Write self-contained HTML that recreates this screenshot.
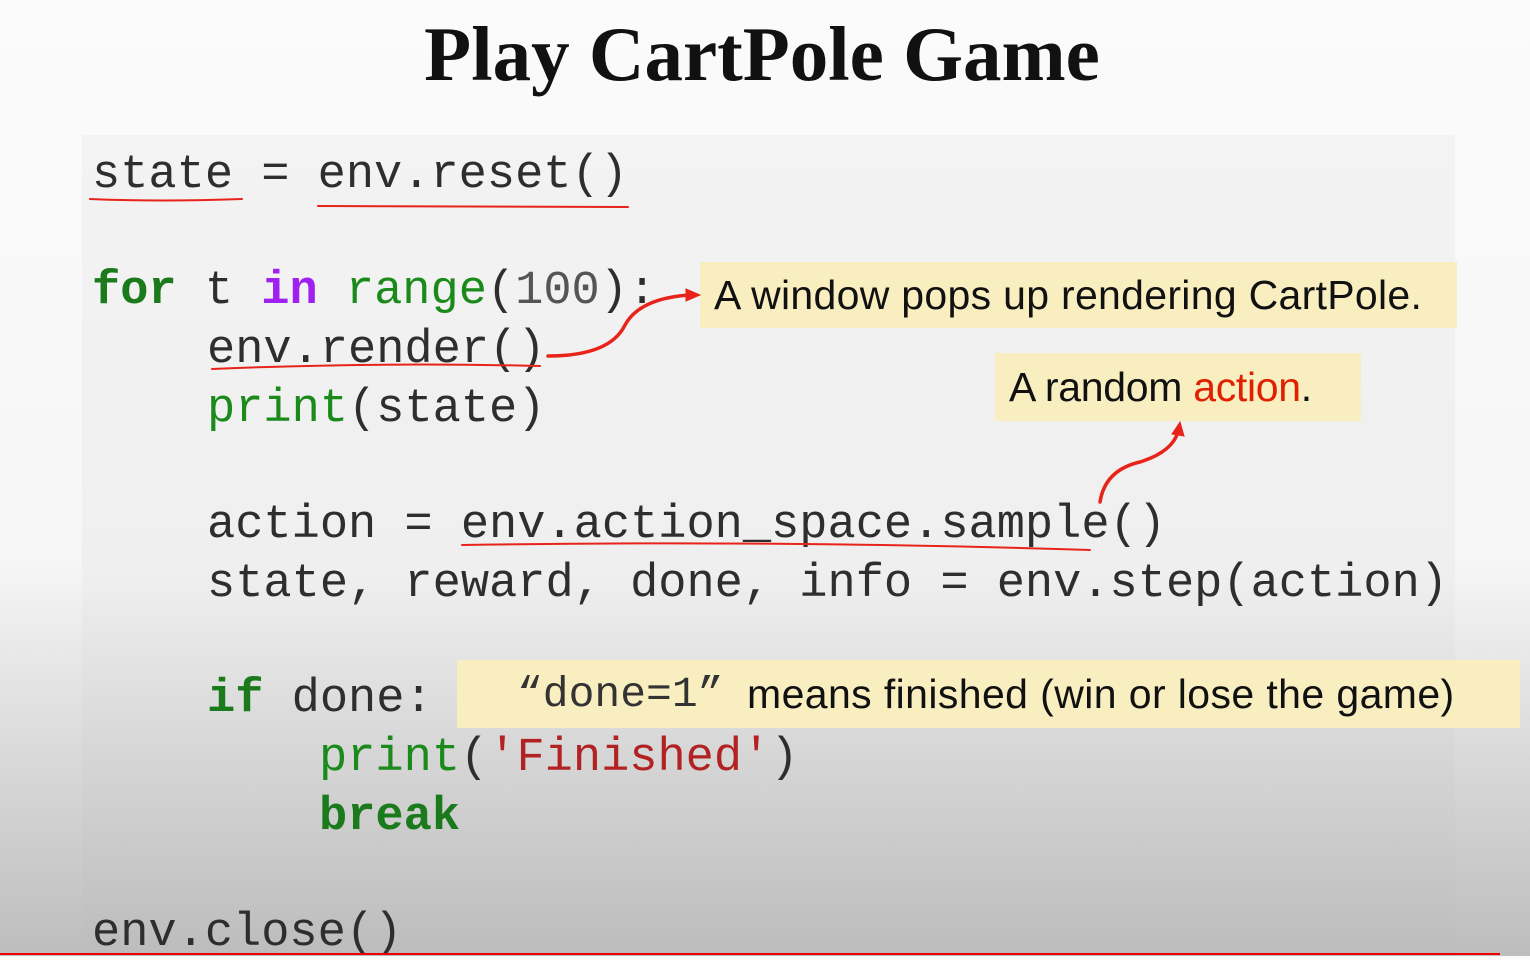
<!DOCTYPE html>
<html><head><meta charset="utf-8"><style>
body{margin:0;width:1530px;height:956px;overflow:hidden;position:relative;
background:linear-gradient(#fbfbfb 0px,#f6f6f6 560px,#dadada 750px,#bdbdbd 956px);font-family:"Liberation Sans",sans-serif}
.panel{position:absolute;left:82px;top:135px;width:1373px;height:821px;background:linear-gradient(#f3f3f3 0px,#efefef 440px,#d6d6d6 620px,#bcbcbc 821px)}
h1{position:absolute;left:0;width:1524px;top:10px;margin:0;text-align:center;font:bold 77px "Liberation Serif",serif;color:#111}
.c{position:absolute;font-family:"Liberation Mono",monospace;font-size:47px;color:#2e2e2e;white-space:pre;line-height:1}
.g{color:#1a8a1a}.k{color:#1b7a1b;font-weight:bold}.p{color:#a020f0;font-weight:bold}.s{color:#b22222}.n{color:#555}
.box{position:absolute;background:#f8eec0;font-size:41px;color:#111;white-space:nowrap;box-sizing:border-box;padding-left:14px;display:flex;align-items:center;letter-spacing:0.3px}
.red{position:absolute;left:0;top:953px;width:1500px;height:2px;background:#e00}
</style></head><body>
<h1>Play CartPole Game</h1>
<div class="panel"></div>
<div class="c" style="left:92px;top:152px">state = env.reset()</div>
<div class="c" style="left:92px;top:268px"><span class="k">for</span> t <span class="p">in</span> <span class="g">range</span>(<span class="n">100</span>):</div>
<div class="c" style="left:207px;top:327px">env.render()</div>
<div class="c" style="left:207px;top:386px"><span class="g">print</span>(state)</div>
<div class="c" style="left:207px;top:502px">action = env.action_space.sample()</div>
<div class="c" style="left:207px;top:561px">state, reward, done, info = env.step(action)</div>
<div class="c" style="left:207px;top:676px"><span class="k">if</span> done:</div>
<div class="c" style="left:319px;top:735px"><span class="g">print</span>(<span class="s">'Finished'</span>)</div>
<div class="c" style="left:319px;top:794px"><span class="k">break</span></div>
<div class="c" style="left:92px;top:910px">env.close()</div>
<div class="box" style="left:700px;top:262px;width:757px;height:66px">A window pops up rendering CartPole.</div>
<div class="box" style="left:995px;top:353px;width:366px;height:68px;letter-spacing:-0.3px">A random&nbsp;<span style="color:#e02000">action</span>.</div>
<div class="box" style="left:457px;top:660px;width:1063px;height:68px;padding-left:60px;letter-spacing:0.4px"><span style="font-family:'Liberation Mono',monospace;font-size:43px;color:#333;letter-spacing:0">“done=1”</span>&nbsp;&nbsp;means finished (win or lose the game)</div>
<svg style="position:absolute;left:0;top:0" width="1530" height="956" fill="none" stroke="#e8231a" stroke-linecap="round">
<path d="M90 199 Q160 202 242 199" stroke-width="2"/>
<path d="M318 206 Q470 207 628 207" stroke-width="2"/>
<path d="M212 369 Q380 362 540 366" stroke-width="2"/>
<path d="M462 545 Q780 540 1090 550" stroke-width="2"/>
<path d="M548 356 Q610 356 625 325 Q640 298 690 295" stroke-width="3.5"/>
<path d="M686 289 L700 295 L686 301 Z" fill="#e8231a" stroke-width="1"/>
<path d="M1100 502 Q1105 470 1140 462 Q1172 452 1178 432" stroke-width="3.5"/>
<path d="M1172 434 L1180 422 L1184 436 Z" fill="#e8231a" stroke-width="1"/>
</svg>
<div class="red"></div>
</body></html>
